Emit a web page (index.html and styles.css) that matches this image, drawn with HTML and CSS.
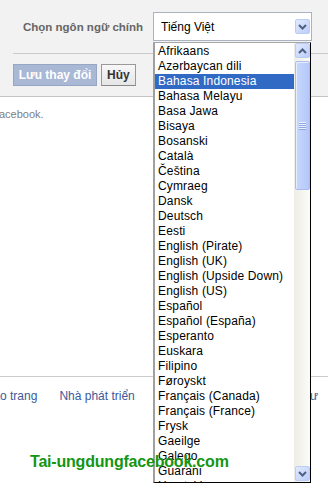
FILE: index.html
```html
<!DOCTYPE html>
<html lang="vi">
<head>
  <meta charset="UTF-8" />
  <meta name="viewport" content="width=device-width, initial-scale=1.0" />
  <title>Cài đặt ngôn ngữ</title>
  <link rel="stylesheet" href="styles.css">
</head>
<body>
  <div class="settings">
    <div class="field">
      <span class="field-label">Chọn ngôn ngữ chính</span>
      <div class="select">
        <span class="select-value">Tiếng Việt</span>
        <span class="sb-btn select-btn">
          <svg width="9" height="6" viewBox="0 0 9 6"><path d="M1 1l3.5 3.5L8 1" stroke="#4d6185" stroke-width="2" fill="none"/></svg>
        </span>
      </div>
    </div>
    <div class="divider"></div>
    <div class="actions">
      <button class="btn btn-primary">Lưu thay đổi</button>
      <button class="btn">Hủy</button>
    </div>
  </div>

  <div class="content">
    <p class="note">acebook.</p>
  </div>

  <div class="footer">
    <a class="first">Tạo trang</a>
    <a>Nhà phát triển</a>
    <a>Việc làm</a>
    <a class="last">Quyền riêng tư</a>
  </div>

  <!-- danh sách mở của ô chọn -->
  <div class="dropdown">
    <ul class="options">
      <li>Afrikaans</li>
      <li>Azərbaycan dili</li>
      <li class="selected">Bahasa Indonesia</li>
      <li>Bahasa Melayu</li>
      <li>Basa Jawa</li>
      <li>Bisaya</li>
      <li>Bosanski</li>
      <li>Català</li>
      <li>Čeština</li>
      <li>Cymraeg</li>
      <li>Dansk</li>
      <li>Deutsch</li>
      <li>Eesti</li>
      <li>English (Pirate)</li>
      <li>English (UK)</li>
      <li>English (Upside Down)</li>
      <li>English (US)</li>
      <li>Español</li>
      <li>Español (España)</li>
      <li>Esperanto</li>
      <li>Euskara</li>
      <li>Filipino</li>
      <li>Føroyskt</li>
      <li>Français (Canada)</li>
      <li>Français (France)</li>
      <li>Frysk</li>
      <li>Gaeilge</li>
      <li>Galego</li>
      <li>Guarani</li>
      <li>Hrvatski</li>
    </ul>
    <div class="scrollbar">
      <span class="sb-btn">
        <svg width="9" height="6" viewBox="0 0 9 6"><path d="M1 5l3.5-3.5L8 5" stroke="#4d6185" stroke-width="2" fill="none"/></svg>
      </span>
      <span class="sb-thumb"><i class="grip"></i></span>
      <span class="sb-btn sb-down">
        <svg width="9" height="6" viewBox="0 0 9 6"><path d="M1 1l3.5 3.5L8 1" stroke="#4d6185" stroke-width="2" fill="none"/></svg>
      </span>
    </div>
  </div>

  <div class="watermark">Tai-ungdungfacebook.com</div>
</body>
</html>
```

FILE: styles.css
```css
body {
  margin: 0;
  background-color: #fff;
  font-family: 'Liberation Sans', Arial, sans-serif;
  overflow: hidden;
  position: relative;
  height: 493px;
}

.settings {
  background-color: #f2f2f2;
  border-bottom: 1px solid #c4c4c4;
  padding: 12px 0 10px 13px;
}

.field {
  display: flex;
  align-items: center;
  height: 29px;
}

.field-label {
  width: 140px;
  flex-shrink: 0;
  padding-left: 10px;
  box-sizing: border-box;
  font-size: 11.5px;
  font-weight: bold;
  color: #666;
  white-space: nowrap;
}

.select {
  width: 159px;
  height: 29px;
  box-sizing: border-box;
  border: 1px solid #a9b4c0;
  background-color: #fff;
  display: flex;
  align-items: center;
  justify-content: space-between;
  padding: 1px;
}

.select-value {
  font-size: 12px;
  padding-left: 6px;
  color: #000;
}

.select-btn {
  height: 25px;
}

.divider {
  height: 1px;
  background-color: #cbcbcb;
  margin: 12px 0 10px;
}

.actions {
  display: flex;
  gap: 4px;
}

.btn {
  height: 22px;
  padding: 0 5px;
  font-family: 'Liberation Sans', Arial, sans-serif;
  font-size: 12px;
  font-weight: bold;
  color: #333;
  background: linear-gradient(#f7f7f7, #e6e6e6);
  border: 1px solid #999;
  border-bottom-color: #888;
  white-space: nowrap;
}

.btn-primary {
  width: 84px;
  padding: 0;
  color: #fff;
  background: #a9b8d5;
  border-color: #97a6c4;
}

.content {
  height: 279px;
  box-sizing: border-box;
  padding-top: 11px;
}

.note {
  margin: 0;
  font-size: 11px;
  color: #808080;
  margin-left: -1px;
}

.footer {
  border-top: 1px solid #ccc;
  display: flex;
  gap: 22px;
  padding: 11px 10px 0 0;
  margin-left: -14px;
}

.footer a {
  font-size: 12px;
  color: #3b5998;
  line-height: 16px;
  white-space: nowrap;
  flex-shrink: 0;
}

.footer .last {
  margin-left: auto;
}

.dropdown {
  position: absolute;
  left: 153px;
  top: 42px;
  width: 158px;
  height: 441px;
  box-sizing: border-box;
  border-left: 2px solid #a0a0a0;
  border-top: 1px solid #a8a8a8;
  border-right: 1px solid #000;
  border-bottom: 1px solid #000;
  background-color: #fff;
  display: flex;
  overflow: hidden;
}

.options {
  list-style: none;
  margin: 0;
  padding: 1px 0 0;
  flex: 1;
}

.options li {
  height: 15px;
  line-height: 15px;
  padding-left: 3px;
  font-size: 12px;
  letter-spacing: 0.15px;
  color: #000;
  white-space: nowrap;
}

.options .selected {
  background-color: #316ac5;
  color: #fff;
}

.scrollbar {
  width: 16px;
  display: flex;
  flex-direction: column;
  align-items: flex-end;
  background: linear-gradient(90deg, #eeede5, #fbfbf8);
}

.sb-btn {
  width: 15px;
  height: 15px;
  box-sizing: border-box;
  border: 1px solid #bccdf5;
  border-radius: 2px;
  background: linear-gradient(135deg, #e1eafe, #bccdf9);
  display: flex;
  align-items: center;
  justify-content: center;
}

.sb-thumb {
  width: 15px;
  height: 129px;
  margin-top: 3px;
  box-sizing: border-box;
  border: 1px solid #a8bdf1;
  border-radius: 2px;
  background: linear-gradient(90deg, #c7d7fd, #bccefb 60%, #b4c7f7);
  box-shadow: inset 1px 1px 0 #e6edff;
  display: flex;
  align-items: center;
  justify-content: center;
}

.grip {
  width: 7px;
  height: 8px;
  background: repeating-linear-gradient(#eef3ff 0 1px, #8ca5e6 1px 2px);
}

.sb-down {
  margin-top: auto;
  margin-bottom: 1px;
}

.watermark {
  position: absolute;
  left: 30px;
  top: 453px;
  font-size: 16px;
  letter-spacing: -0.2px;
  font-weight: bold;
  color: #149514;
}
```
